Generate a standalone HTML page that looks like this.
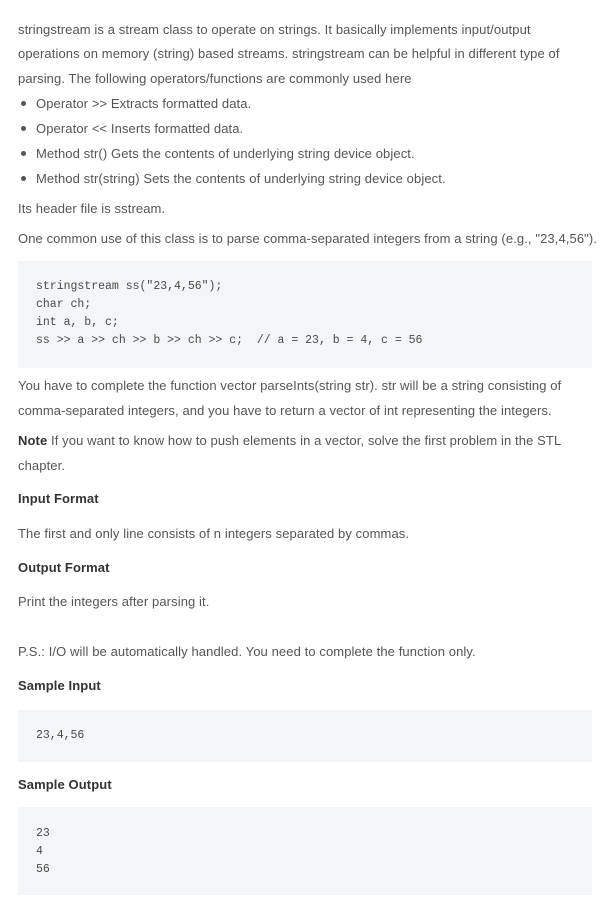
<!DOCTYPE html>
<html><head><meta charset="utf-8"><style>
body{margin:0;background:#fff;width:608px;height:921px;position:relative;font-family:"Liberation Sans",sans-serif;color:#555;font-size:13px;overflow:hidden}
.t{position:absolute;left:18px;white-space:nowrap;line-height:16px;letter-spacing:0.1px}
.b{font-weight:bold;color:#333}
.li{left:36px}
.dot{position:absolute;left:21px;width:5px;height:5px;border-radius:50%;background:#555}
.box{position:absolute;left:18px;width:574px;background:#f3f5f6}
.m{position:absolute;left:36px;font-family:"Liberation Mono",monospace;font-size:11.5px;line-height:18px;color:#4a4a4a;white-space:pre}
</style></head><body>
<div class="t" style="top:22px">stringstream is a stream class to operate on strings. It basically implements input/output</div>
<div class="t" style="top:46px">operations on memory (string) based streams. stringstream can be helpful in different type of</div>
<div class="t" style="top:71px">parsing. The following operators/functions are commonly used here</div>
<div class="dot" style="top:101px"></div><div class="t li" style="top:96px">Operator &gt;&gt; Extracts formatted data.</div>
<div class="dot" style="top:126px"></div><div class="t li" style="top:121px">Operator &lt;&lt; Inserts formatted data.</div>
<div class="dot" style="top:151px"></div><div class="t li" style="top:146px">Method str() Gets the contents of underlying string device object.</div>
<div class="dot" style="top:176px"></div><div class="t li" style="top:171px">Method str(string) Sets the contents of underlying string device object.</div>
<div class="t" style="top:201px">Its header file is sstream.</div>
<div class="t" style="top:231px">One common use of this class is to parse comma-separated integers from a string (e.g., "23,4,56").</div>
<div class="box" style="top:261px;height:107px"></div>
<div class="m" style="top:278px">stringstream ss("23,4,56");
char ch;
int a, b, c;
ss &gt;&gt; a &gt;&gt; ch &gt;&gt; b &gt;&gt; ch &gt;&gt; c;  // a = 23, b = 4, c = 56</div>
<div class="t" style="top:378px">You have to complete the function vector parseInts(string str). str will be a string consisting of</div>
<div class="t" style="top:403px">comma-separated integers, and you have to return a vector of int representing the integers.</div>
<div class="t" style="top:433px"><span class="b">Note</span> If you want to know how to push elements in a vector, solve the first problem in the STL</div>
<div class="t" style="top:458px">chapter.</div>
<div class="t b" style="top:491px">Input Format</div>
<div class="t" style="top:526px">The first and only line consists of n integers separated by commas.</div>
<div class="t b" style="top:560px">Output Format</div>
<div class="t" style="top:594px">Print the integers after parsing it.</div>
<div class="t" style="top:644px">P.S.: I/O will be automatically handled. You need to complete the function only.</div>
<div class="t b" style="top:678px">Sample Input</div>
<div class="box" style="top:710px;height:52px"></div>
<div class="m" style="top:727px">23,4,56</div>
<div class="t b" style="top:777px">Sample Output</div>
<div class="box" style="top:807px;height:88px"></div>
<div class="m" style="top:825px">23
4
56</div>
</body></html>
